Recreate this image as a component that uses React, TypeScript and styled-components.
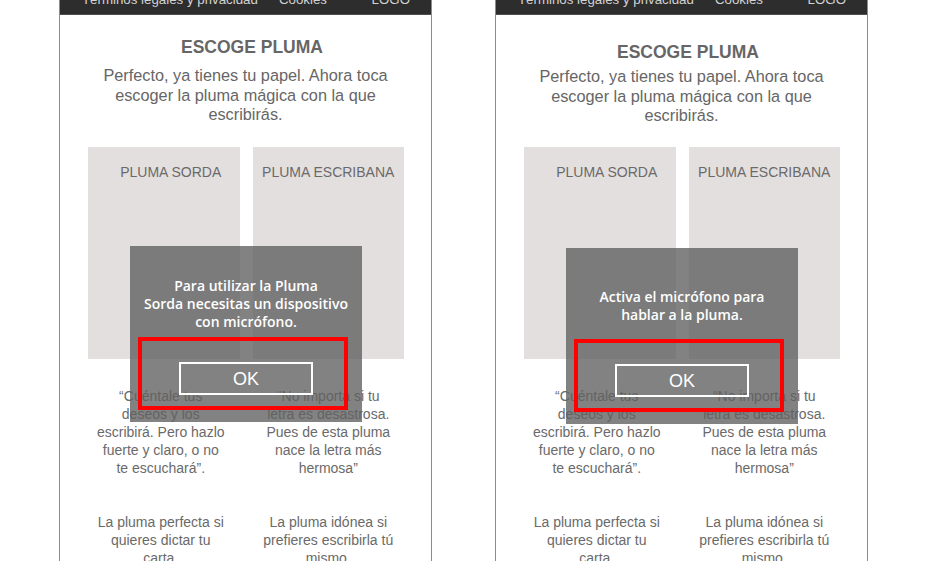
import React from "react";
import styled, { createGlobalStyle } from "styled-components";

const Global = createGlobalStyle`
  html, body { margin: 0; padding: 0; background: #fff; overflow: hidden; }
  body { font-family: "Liberation Sans", Arial, sans-serif; }
`;

const Page = styled.div`
  display: flex;
  gap: 63px;
  padding-left: 59px;
  height: 561px;
  overflow: hidden;
`;

const Frame = styled.div`
  position: relative;
  width: 373px;
  height: 620px;
  box-sizing: border-box;
  border-left: 1px solid #8c8c8c;
  border-right: 1px solid #8c8c8c;
  display: flex;
  flex-direction: column;
  background: #fff;
  flex-shrink: 0;
`;

const Header = styled.div`
  height: 40px;
  margin-top: -25px;
  box-sizing: border-box;
  background: #2d2d2d;
  border-bottom: 1px solid #4e4e4e;
  display: flex;
  align-items: flex-end;
  padding: 0 21px 6px 22px;
  flex-shrink: 0;
`;

const HeaderLink = styled.span<{ $push?: boolean; $gap?: number }>`
  font-size: 13.3px;
  line-height: 16px;
  color: #d2d2d2;
  white-space: nowrap;
  margin-left: ${(p) => (p.$push ? "auto" : `${p.$gap ?? 0}px`)};
`;

const Title = styled.h1<{ $top: number }>`
  margin: ${(p) => p.$top}px 0 0 0;
  padding-left: 13px;
  font-size: 17.5px;
  line-height: 20px;
  font-weight: 700;
  color: #666;
  text-align: center;
`;

const Intro = styled.p<{ $top: number }>`
  margin: ${(p) => p.$top}px 0 0 0;
  font-size: 16.3px;
  line-height: 19.5px;
  color: #666;
  text-align: center;
`;

const Grid = styled.div<{ $top: number; $rowGap?: number }>`
  display: grid;
  grid-template-columns: 1fr 1fr;
  column-gap: 13px;
  row-gap: ${(p) => p.$rowGap ?? 0}px;
  padding: 0 27px 0 28px;
  margin-top: ${(p) => p.$top}px;
`;

const Card = styled.div`
  height: 212px;
  background: #e4dfdf;
  display: flex;
  justify-content: center;
`;

const CardLabel = styled.span<{ $shift?: number }>`
  margin-top: 17px;
  padding-left: ${(p) => p.$shift ?? 0}px;
  font-size: 14px;
  line-height: 16px;
  color: #6a6a6a;
  white-space: nowrap;
`;

const Blurb = styled.p<{ $shift?: number }>`
  margin: 0;
  font-size: 14px;
  line-height: 18px;
  color: #6a6a6a;
  text-align: center;
  white-space: nowrap;
  padding-right: ${(p) => p.$shift ?? 0}px;
`;

const Dialog = styled.div<{ $top: number }>`
  position: absolute;
  left: 70px;
  top: ${(p) => p.$top}px;
  width: 232px;
  height: 176px;
  background: rgba(97, 97, 97, 0.79);
  display: flex;
  flex-direction: column;
  align-items: center;
`;

const Message = styled.div`
  flex: 1;
  display: flex;
  align-items: center;
  justify-content: center;
  text-align: center;
  font-family: "Open Sans", "Noto Sans", sans-serif;
  font-weight: 600;
  font-size: 14px;
  line-height: 18px;
  color: #fff;
  white-space: nowrap;
`;

const OkButton = styled.button`
  position: relative;
  width: 134px;
  height: 33px;
  margin: 0 0 27px 0;
  padding: 0;
  box-sizing: border-box;
  border: 2px solid #fff;
  background: transparent;
  color: #fff;
  font-family: "Liberation Sans", Arial, sans-serif;
  font-size: 18px;
  line-height: 20px;
  display: flex;
  align-items: center;
  justify-content: center;
`;

const Highlight = styled.span`
  position: absolute;
  top: -27px;
  bottom: -17px;
  left: -43px;
  right: -37px;
  border: 4px solid #ff0000;
  box-sizing: border-box;
  pointer-events: none;
`;

type ScreenProps = {
  titleTop: number;
  introTop: number;
  cardsTop: number;
  dialogTop: number;
  message: React.ReactNode;
};

const Screen: React.FC<ScreenProps> = ({ titleTop, introTop, cardsTop, dialogTop, message }) => (
  <Frame>
    <Header>
      <HeaderLink>Términos legales y privacidad</HeaderLink>
      <HeaderLink $gap={21}>Cookies</HeaderLink>
      <HeaderLink $push>LOGO</HeaderLink>
    </Header>
    <Title $top={titleTop}>ESCOGE PLUMA</Title>
    <Intro $top={introTop}>
      Perfecto, ya tienes tu papel. Ahora toca
      <br />
      escoger la pluma mágica con la que
      <br />
      escribirás.
    </Intro>
    <Grid $top={cardsTop}>
      <Card>
        <CardLabel $shift={14}>PLUMA SORDA</CardLabel>
      </Card>
      <Card>
        <CardLabel>PLUMA ESCRIBANA</CardLabel>
      </Card>
    </Grid>
    <Grid $top={28} $rowGap={36}>
      <Blurb $shift={6}>
        “Cuéntale tus
        <br />
        deseos y los
        <br />
        escribirá. Pero hazlo
        <br />
        fuerte y claro, o no
        <br />
        te escuchará”.
      </Blurb>
      <Blurb>
        “No importa si tu
        <br />
        letra es desastrosa.
        <br />
        Pues de esta pluma
        <br />
        nace la letra más
        <br />
        hermosa”
      </Blurb>
      <Blurb $shift={6}>
        La pluma perfecta si
        <br />
        quieres dictar tu
        <br />
        carta.
      </Blurb>
      <Blurb>
        La pluma idónea si
        <br />
        prefieres escribirla tú
        <br />
        mismo.
      </Blurb>
    </Grid>
    <Dialog $top={dialogTop}>
      <Message>{message}</Message>
      <OkButton type="button">
        OK
        <Highlight />
      </OkButton>
    </Dialog>
  </Frame>
);

export default function App() {
  return (
    <>
      <Global />
      <Page>
        <Screen
          titleTop={22}
          introTop={9}
          cardsTop={22}
          dialogTop={246}
          message={
            <span>
              Para utilizar la Pluma
              <br />
              Sorda necesitas un dispositivo
              <br />
              con micrófono.
            </span>
          }
        />
        <Screen
          titleTop={27}
          introTop={5}
          cardsTop={21}
          dialogTop={248}
          message={
            <span>
              Activa el micrófono para
              <br />
              hablar a la pluma.
            </span>
          }
        />
      </Page>
    </>
  );
}
